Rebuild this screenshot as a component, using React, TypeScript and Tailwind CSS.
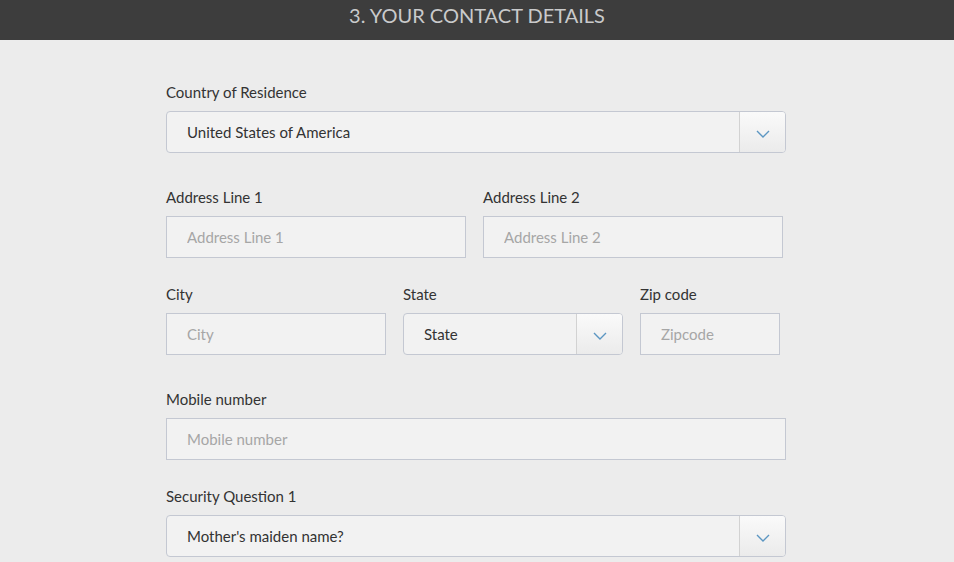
const FONT = { fontFamily: "Lato, 'Open Sans', sans-serif" };

function Label({ children }: { children: React.ReactNode }) {
  return <label className="mb-[11px] block text-[15px] leading-[16px] text-[#333]">{children}</label>;
}

function TextInput({ placeholder, className = "" }: { placeholder: string; className?: string }) {
  return (
    <input
      placeholder={placeholder}
      className={`h-[42px] border border-[#c4c8d2] bg-[#f2f2f2] px-5 text-[15px] text-[#333] outline-none placeholder:text-[#a6a6a6] ${className}`}
      style={FONT}
    />
  );
}

function Chevron() {
  return (
    <svg width="14" height="8" viewBox="0 0 14 8" fill="none">
      <path d="M1 1l6 6 6-6" stroke="#5b96c2" strokeWidth="1.4" />
    </svg>
  );
}

function Select({ value, className = "" }: { value: string; className?: string }) {
  return (
    <div
      className={`flex h-[42px] items-stretch overflow-hidden rounded-[4px] border border-[#c4c8d2] bg-[#f2f2f2] ${className}`}
    >
      <div className="flex flex-1 items-center pl-5 pt-[1px] text-[15px] text-[#333]">{value}</div>
      <div className="flex w-[46px] items-center justify-center border-l border-[#d2d2d2] bg-gradient-to-b from-[#fafafa] to-[#ebebeb] pt-[4px]">
        <Chevron />
      </div>
    </div>
  );
}

export default function App() {
  return (
    <div className="min-h-[562px] bg-[#ececec]" style={FONT}>
      <div className="flex h-10 items-center justify-center bg-[#3d3d3d] pb-[10px]">
        <h1 className="text-[20px] text-[#c9cacb]">3. YOUR CONTACT DETAILS</h1>
      </div>

      <div className="ml-[166px] w-[620px] pt-[44px]">
        <div>
          <Label>Country of Residence</Label>
          <Select value="United States of America" className="w-[620px]" />
        </div>

        <div className="mt-[36px] flex gap-[17px]">
          <div>
            <Label>Address Line 1</Label>
            <TextInput placeholder="Address Line 1" className="w-[300px]" />
          </div>
          <div>
            <Label>Address Line 2</Label>
            <TextInput placeholder="Address Line 2" className="w-[300px]" />
          </div>
        </div>

        <div className="mt-[28px] flex gap-[17px]">
          <div>
            <Label>City</Label>
            <TextInput placeholder="City" className="w-[220px]" />
          </div>
          <div>
            <Label>State</Label>
            <Select value="State" className="w-[220px]" />
          </div>
          <div>
            <Label>Zip code</Label>
            <TextInput placeholder="Zipcode" className="w-[140px]" />
          </div>
        </div>

        <div className="mt-[36px]">
          <Label>Mobile number</Label>
          <TextInput placeholder="Mobile number" className="w-[620px]" />
        </div>

        <div className="mt-[28px]">
          <Label>Security Question 1</Label>
          <Select value="Mother's maiden name?" className="w-[620px]" />
        </div>
      </div>
    </div>
  );
}
